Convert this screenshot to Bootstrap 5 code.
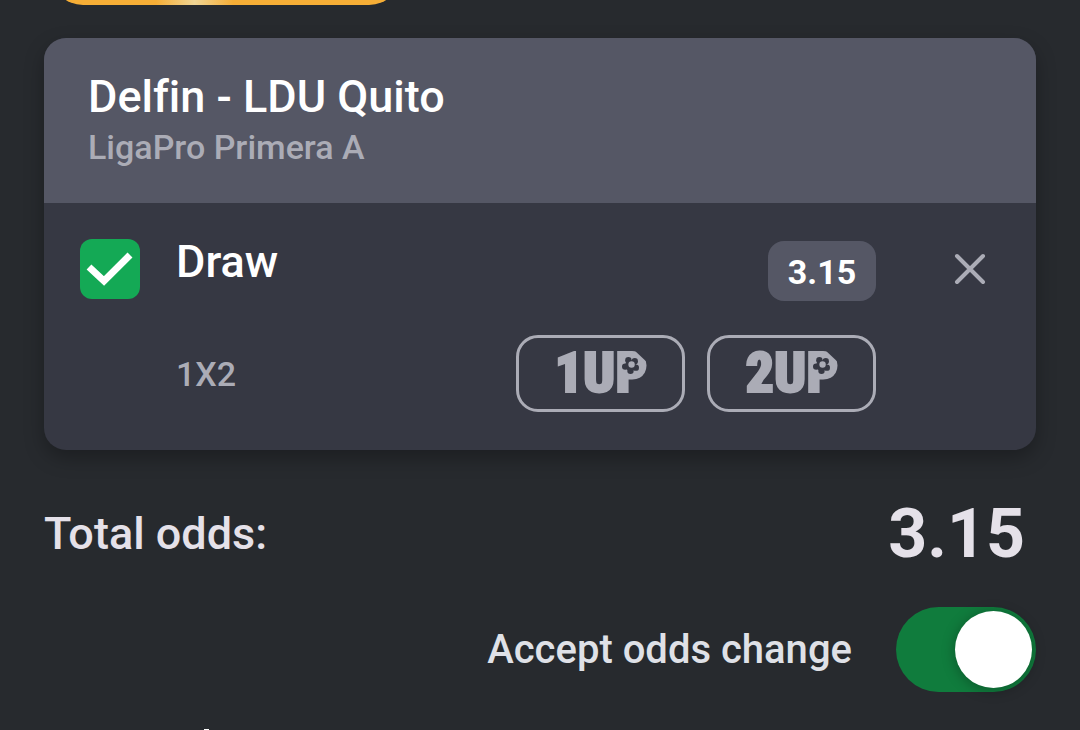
<!DOCTYPE html>
<html lang="en">
<head>
<meta charset="utf-8">
<meta name="viewport" content="width=device-width, initial-scale=1">
<title>Betslip</title>
<link rel="stylesheet" href="https://cdn.jsdelivr.net/npm/bootstrap@5.3.0/dist/css/bootstrap.min.css">
<style>
body { background: #272a2e; color: #e5e1e9; font-family: Roboto, "Liberation Sans", sans-serif; font-weight: 500; font-variant-ligatures: none; }
.slip { padding: 0 44px; }
.promo { width: 350px; height: 85px; margin: -80px 0 0 7px; border: 0; border-radius: 32px;
  background: linear-gradient(90deg, #f6ae36 30%, #f0d595 41%, #f6ae36 52%); }
.bet { margin-top: 33px; border: 0; border-radius: 22px; background: #363843; color: #fff; box-shadow: 0 8px 20px rgba(0,0,0,.28); overflow: hidden; }
.bet-head { background: #555765; padding: 32px 44px 33px; border: 0; }
.t-lg { font-size: 45px; line-height: 54px; }
.t-sm { font-size: 34px; line-height: 46px; color: #abacb6; }
.bet-body { padding: 36px 36px 38px; }
.tick.form-check-input { width: 60px; height: 60px; margin: 0; border: 0; border-radius: 12px; }
.tick.form-check-input:checked { background: #14a955 url("data:image/svg+xml,%3Csvg xmlns='http://www.w3.org/2000/svg' viewBox='0 0 60 60'%3E%3Cpath fill='none' stroke='%23fff' stroke-width='7' d='M9 28l15 14 26-26'/%3E%3C/svg%3E") center / 60px; }
.pick { margin-left: 36px; line-height: 46px; }
.odd { width: 108px; height: 60px; margin: 2px 64px 0 0; border: 0; border-radius: 16px; background: #555765; color: #fff; font-size: 34px; font-weight: 700; line-height: 62px; }
.shut { width: 60px; height: 60px; border: 0; color: #abacb6; }
.market { padding: 0 124px 0 96px; margin-top: 34px; }
.offers { gap: 22px; }
.offer { width: 169px; height: 77px; border: 3px solid #abacb6; border-radius: 22px; color: #abacb6; }
.offer text { font-family: "Roboto Condensed", "Liberation Sans Narrow", Roboto, sans-serif; font-weight: 900; font-size: 56px; fill: #abacb6; stroke: #abacb6; stroke-width: 2px; }
.totals { margin-top: 48px; padding-right: 11px; }
.t-xl { font-size: 68px; font-weight: 700; line-height: 72px; }
.accept { margin-top: 37px; gap: 44px; color: #dfe1e7; }
.t-md { font-size: 40px; line-height: 48px; }
.toggle.form-check-input { width: 140px; height: 85px; margin: 0; padding: 4px; border: 0; border-radius: 43px; display: flex; }
.toggle.form-check-input:checked { background: #107c3d; justify-content: flex-end; }
.toggle::before { content: ""; width: 77px; height: 77px; border-radius: 50%; background: #fff; box-shadow: 0 2px 14px rgba(0,0,0,.3); }
.next-line { width: 5px; height: 1px; margin: 37px 0 0 160px; background: #fff; }
</style>
</head>
<body class="overflow-hidden">
<svg class="d-none">
  <symbol id="ball" viewBox="0 0 16 16">
    <g fill="#363843"><circle cx="6" cy="3" r="3"/><circle cx="12" cy="4" r="3"/><circle cx="13" cy="10" r="3"/><circle cx="8" cy="13" r="3"/><circle cx="3" cy="9" r="3"/><circle cx="8" cy="8" r="5"/></g>
    <circle cx="9" cy="7" r="3" fill="#abacb6"/>
  </symbol>
</svg>
<main class="slip">
  <button class="promo d-block" type="button" aria-label="Promotion"></button>

  <section class="card bet">
    <header class="card-header bet-head">
      <h1 class="t-lg m-0">Delfin - LDU Quito</h1>
      <p class="t-sm m-0">LigaPro Primera A</p>
    </header>
    <div class="card-body bet-body">
      <div class="d-flex align-items-start">
        <input class="form-check-input tick flex-shrink-0" type="checkbox" id="draw" checked>
        <label class="t-lg pick me-auto" for="draw">Draw</label>
        <button class="btn odd p-0" type="button">3.15</button>
        <button class="btn shut p-0 d-flex align-items-center justify-content-center" type="button" aria-label="Remove">
          <svg width="34" height="34" viewBox="0 0 34 34" fill="none" stroke="currentColor" stroke-width="4" stroke-linecap="round"><path d="M4 4l26 26M30 4L4 30"/></svg>
        </button>
      </div>
      <div class="market d-flex align-items-center justify-content-between">
        <span class="t-sm">1X2</span>
        <div class="d-flex offers">
          <button class="btn offer p-0 d-flex align-items-center justify-content-center" type="button">
            <svg width="120" height="71" viewBox="0 0 120 71"><text x="60" y="54" text-anchor="middle">1UP</text><path d="M92 11h17v16z" fill="#363843"/><use href="#ball" x="81" y="19" width="17" height="17"/></svg>
          </button>
          <button class="btn offer p-0 d-flex align-items-center justify-content-center" type="button">
            <svg width="120" height="71" viewBox="0 0 120 71"><text x="60" y="54" text-anchor="middle">2UP</text><path d="M92 11h17v16z" fill="#363843"/><use href="#ball" x="81" y="19" width="17" height="17"/></svg>
          </button>
        </div>
      </div>
    </div>
  </section>

  <div class="totals d-flex align-items-center justify-content-between">
    <span class="t-lg">Total odds:</span>
    <strong class="t-xl">3.15</strong>
  </div>
  <div class="accept d-flex align-items-center justify-content-end">
    <label class="t-md" for="accept">Accept odds change</label>
    <input class="form-check-input toggle flex-shrink-0" type="checkbox" role="switch" id="accept" checked>
  </div>
  <div class="next-line"></div>
</main>
<script src="https://cdn.jsdelivr.net/npm/bootstrap@5.3.0/dist/js/bootstrap.bundle.min.js"></script>
</body>
</html>
